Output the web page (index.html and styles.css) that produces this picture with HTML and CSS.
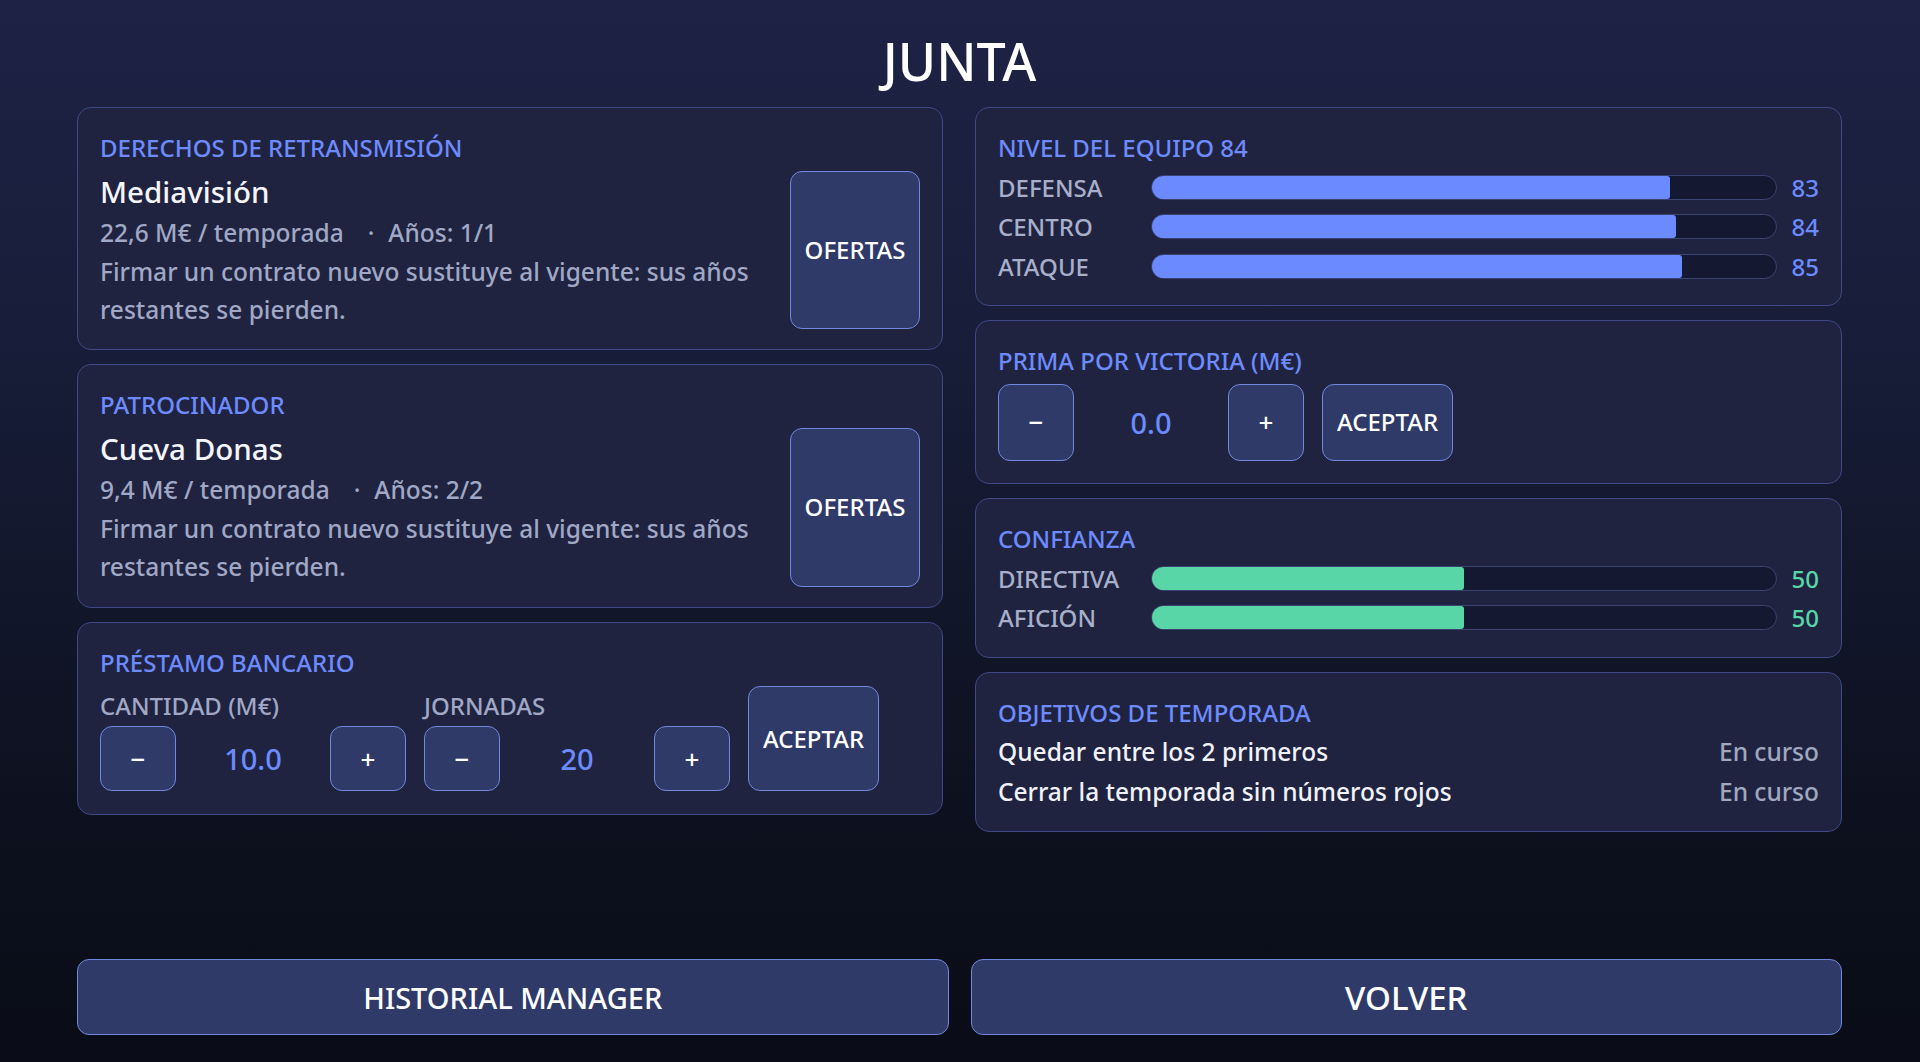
FILE: index.html
```html
<!DOCTYPE html>
<html lang="es">
<head>
  <meta charset="UTF-8">
  <title>Junta</title>
  <link rel="stylesheet" href="styles.css">
</head>
<body>
  <h1 class="title">JUNTA</h1>

  <main class="board">
    <div class="column">
      <section class="card card-contract">
        <h2 class="card-title">DERECHOS DE RETRANSMISIÓN</h2>
        <div class="contract">
          <div class="contract-info">
            <div class="contract-name">Mediavisión</div>
            <div class="contract-meta">22,6 M€ / temporada<span class="sep">·</span>Años: 1/1</div>
            <p class="contract-note">Firmar un contrato nuevo sustituye al vigente: sus años restantes se pierden.</p>
          </div>
          <button class="btn btn-offers">OFERTAS</button>
        </div>
      </section>

      <section class="card card-contract">
        <h2 class="card-title">PATROCINADOR</h2>
        <div class="contract">
          <div class="contract-info">
            <div class="contract-name">Cueva Donas</div>
            <div class="contract-meta">9,4 M€ / temporada<span class="sep">·</span>Años: 2/2</div>
            <p class="contract-note">Firmar un contrato nuevo sustituye al vigente: sus años restantes se pierden.</p>
          </div>
          <button class="btn btn-offers">OFERTAS</button>
        </div>
      </section>

      <section class="card card-loan">
        <h2 class="card-title">PRÉSTAMO BANCARIO</h2>
        <div class="loan">
          <div class="loan-field">
            <span class="field-label">CANTIDAD (M€)</span>
            <div class="stepper stepper-loan">
              <button class="btn btn-step">−</button>
              <span class="stepper-value">10.0</span>
              <button class="btn btn-step">+</button>
            </div>
          </div>
          <div class="loan-field">
            <span class="field-label">JORNADAS</span>
            <div class="stepper stepper-loan">
              <button class="btn btn-step">−</button>
              <span class="stepper-value">20</span>
              <button class="btn btn-step">+</button>
            </div>
          </div>
          <button class="btn btn-accept">ACEPTAR</button>
        </div>
      </section>
    </div>

    <div class="column column-right">
      <section class="card">
        <h2 class="card-title">NIVEL DEL EQUIPO 84</h2>
        <div class="stat-row">
          <span class="stat-label">DEFENSA</span>
          <div class="bar"><div class="bar-fill" style="width: 83%"></div></div>
          <span class="stat-value">83</span>
        </div>
        <div class="stat-row">
          <span class="stat-label">CENTRO</span>
          <div class="bar"><div class="bar-fill" style="width: 84%"></div></div>
          <span class="stat-value">84</span>
        </div>
        <div class="stat-row">
          <span class="stat-label">ATAQUE</span>
          <div class="bar"><div class="bar-fill" style="width: 85%"></div></div>
          <span class="stat-value">85</span>
        </div>
      </section>

      <section class="card">
        <h2 class="card-title">PRIMA POR VICTORIA (M€)</h2>
        <div class="stepper stepper-bonus">
          <button class="btn btn-step">−</button>
          <span class="stepper-value">0.0</span>
          <button class="btn btn-step">+</button>
          <button class="btn btn-accept">ACEPTAR</button>
        </div>
      </section>

      <section class="card">
        <h2 class="card-title">CONFIANZA</h2>
        <div class="stat-row trust">
          <span class="stat-label">DIRECTIVA</span>
          <div class="bar"><div class="bar-fill" style="width: 50%"></div></div>
          <span class="stat-value">50</span>
        </div>
        <div class="stat-row trust">
          <span class="stat-label">AFICIÓN</span>
          <div class="bar"><div class="bar-fill" style="width: 50%"></div></div>
          <span class="stat-value">50</span>
        </div>
      </section>

      <section class="card">
        <h2 class="card-title">OBJETIVOS DE TEMPORADA</h2>
        <div class="goal">
          <span>Quedar entre los 2 primeros</span>
          <span class="goal-state">En curso</span>
        </div>
        <div class="goal">
          <span>Cerrar la temporada sin números rojos</span>
          <span class="goal-state">En curso</span>
        </div>
      </section>
    </div>
  </main>

  <footer class="footer">
    <button class="btn btn-wide">HISTORIAL MANAGER</button>
    <button class="btn btn-wide btn-back">VOLVER</button>
  </footer>
</body>
</html>
```

FILE: styles.css
```css
* {
  box-sizing: border-box;
}

body {
  margin: 0;
  height: 100vh;
  padding: 27px 78px 27px 77px;
  display: flex;
  flex-direction: column;
  font-family: 'Noto Sans', 'Open Sans', sans-serif;
  font-weight: 500;
  color: #ffffff;
  background: linear-gradient(180deg, #1e2346 0%, #161b35 40%, #0d111f 75%, #0a0d17 100%);
}

.title {
  margin: 0 0 12px;
  text-align: center;
  font-size: 52px;
  font-weight: 500;
  line-height: 68px;
}

.board {
  display: grid;
  grid-template-columns: 866px 1fr;
  column-gap: 32px;
  align-items: start;
}

.column {
  display: flex;
  flex-direction: column;
  gap: 14px;
}

.card {
  display: flex;
  flex-direction: column;
  gap: 6px;
  padding: 23px 22px 21px;
  background-color: #1f2340;
  border: 1px solid #3e4985;
  border-radius: 14px;
}

.column-right .card {
  padding-bottom: 22px;
}

.card-contract {
  padding-bottom: 20px;
}

.card-loan {
  padding-bottom: 23px;
}

.card-title {
  margin: 0;
  color: #6d8bff;
  font-size: 24px;
  font-weight: 500;
  line-height: 33.6px;
}

/* contratos */
.contract {
  display: flex;
  gap: 22px;
}

.contract-info {
  flex: 1;
}

.contract-name {
  font-size: 29.5px;
  line-height: 42px;
  color: #f4f5fb;
}

.contract-meta,
.contract-note {
  margin: 0;
  font-size: 24.5px;
  line-height: 38.4px;
  color: #a0a8c6;
}

.contract-meta {
  line-height: 40px;
}

.sep {
  margin: 0 14px 0 24px;
}

/* botones */
.btn {
  font-family: inherit;
  font-weight: 500;
  color: #ffffff;
  background-color: #2f3a68;
  border: 1px solid #7288dc;
  border-radius: 12px;
  cursor: pointer;
  line-height: 1;
  padding: 0;
}

.btn-offers {
  width: 130px;
  font-size: 24px;
}

.btn-step {
  width: 76px;
  font-size: 26px;
}

.btn-accept {
  width: 131px;
  font-size: 24px;
}

.btn-wide {
  height: 76px;
  font-size: 29px;
}

.btn-back {
  font-size: 33px;
}

/* steppers */
.stepper {
  display: flex;
  align-items: stretch;
  gap: 18px;
}

.stepper-value {
  width: 118px;
  display: flex;
  align-items: center;
  justify-content: center;
  color: #6d8bff;
  font-size: 29px;
}

.stepper-bonus {
  height: 77px;
}

.stepper-loan {
  height: 65px;
}

.loan {
  display: flex;
  gap: 18px;
  margin-top: 1px;
}

.loan-field {
  display: flex;
  flex-direction: column;
  gap: 3px;
}

.field-label {
  padding-top: 3px;
  font-size: 24px;
  line-height: 33.6px;
  color: #a0a8c6;
}

/* barras */
.stat-row {
  display: grid;
  grid-template-columns: 139px 1fr 28px;
  column-gap: 14px;
  align-items: center;
  font-size: 24px;
  line-height: 33.6px;
}

.stat-label {
  color: #a8afca;
}

.bar {
  height: 25px;
  background-color: #141830;
  border: 1px solid #3a4372;
  border-radius: 13px;
  overflow: hidden;
}

.bar-fill {
  height: 100%;
  background-color: #6b8aff;
  border-radius: 0 3px 3px 0;
}

.stat-value {
  text-align: right;
  color: #6b8aff;
}

.trust .bar-fill {
  background-color: #59d6a7;
}

.trust .stat-value {
  color: #59d6a7;
}

/* objetivos */
.goal {
  display: flex;
  justify-content: space-between;
  font-size: 24.5px;
  line-height: 33.6px;
  color: #f1f2f8;
}

.goal-state {
  color: #a0a8c0;
}

.footer {
  margin-top: auto;
  display: grid;
  grid-template-columns: 1fr 1fr;
  column-gap: 22px;
}
```
